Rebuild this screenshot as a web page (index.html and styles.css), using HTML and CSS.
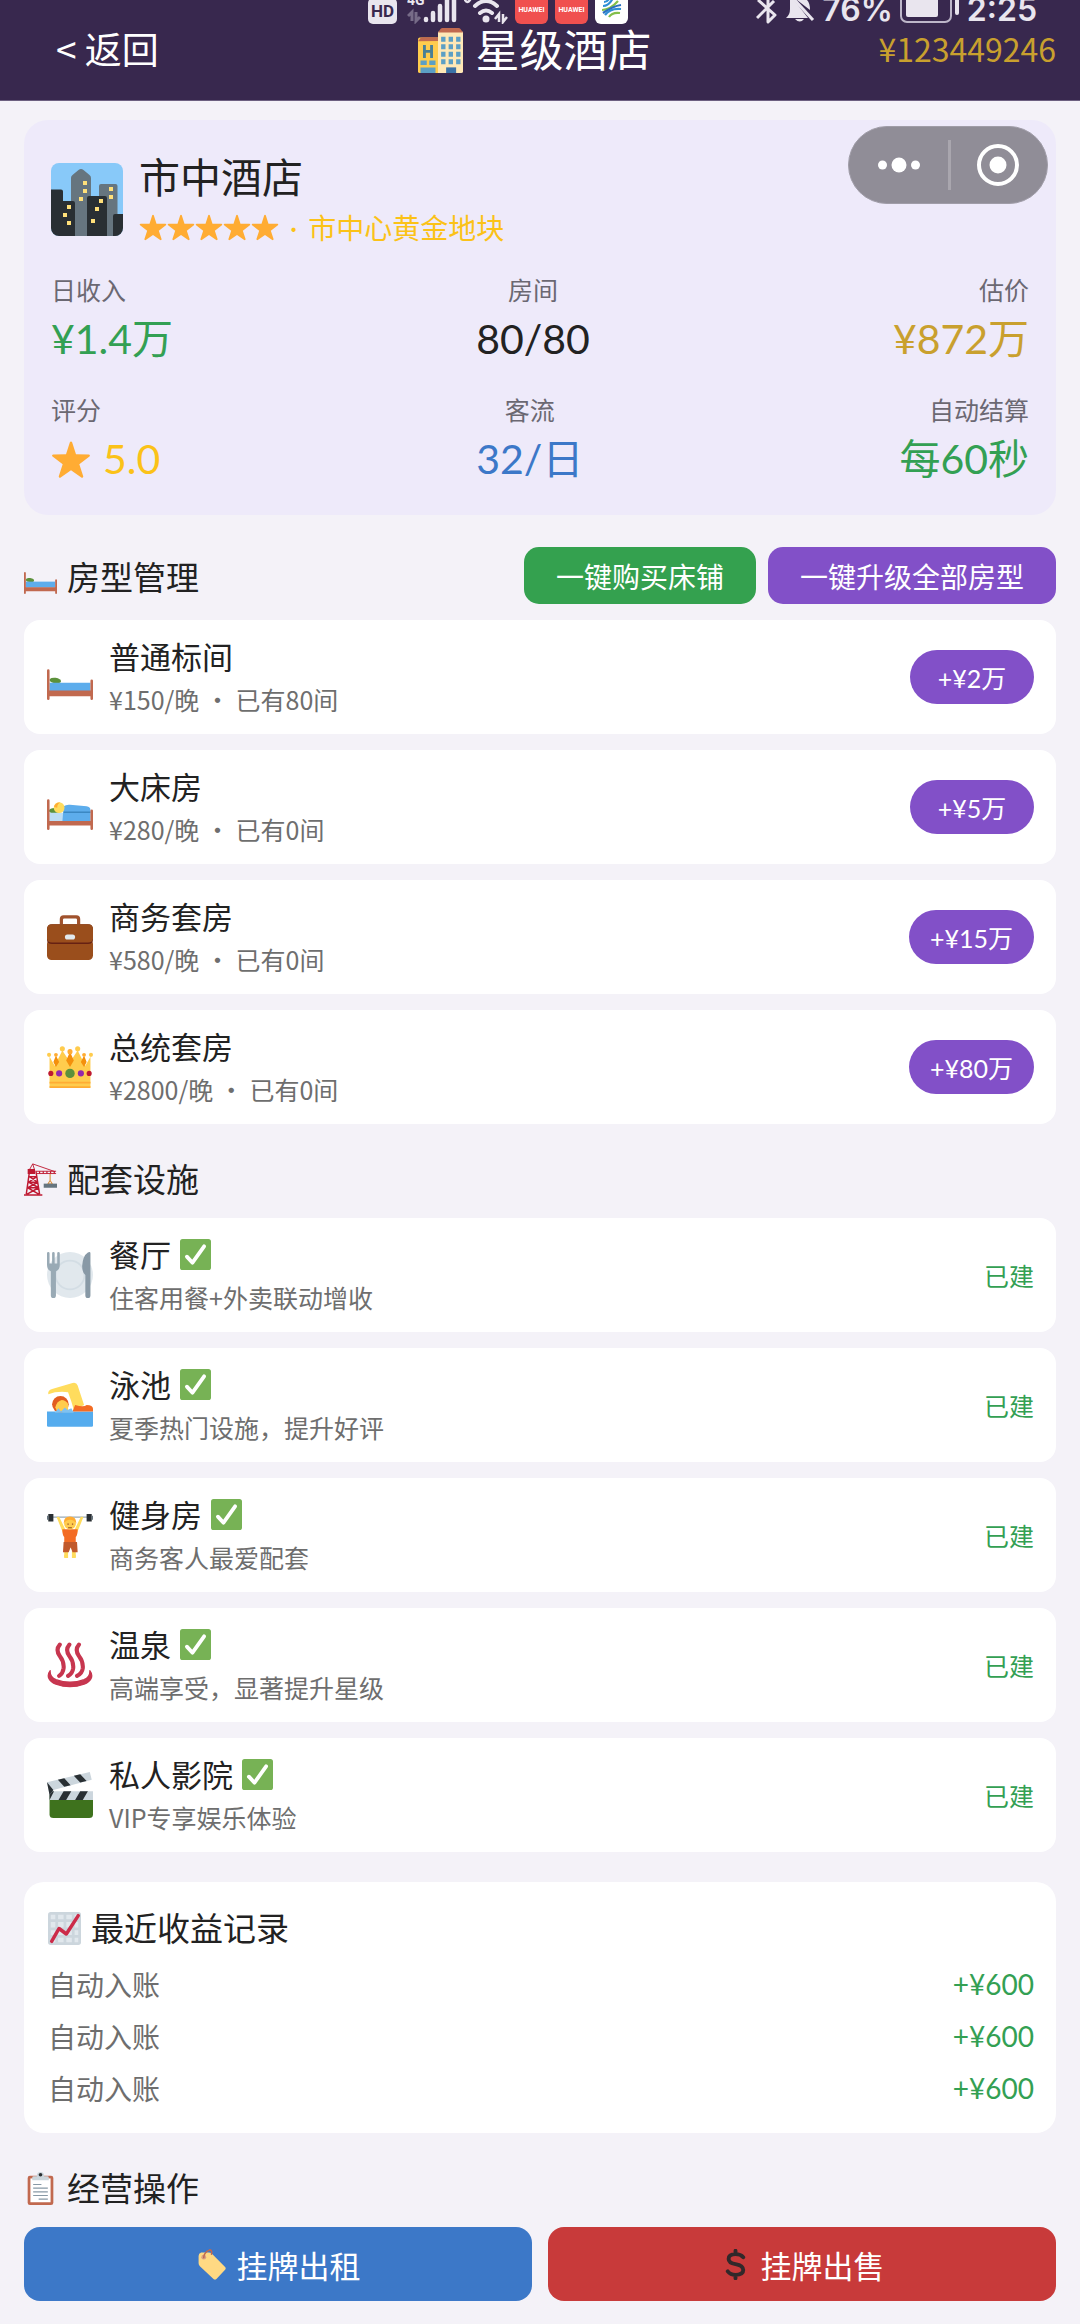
FILE: index.html
```html
<!DOCTYPE html>
<html lang="zh-CN">
<head>
<meta charset="utf-8">
<meta name="viewport" content="width=device-width, initial-scale=1">
<title>星级酒店</title>
<link rel="stylesheet" href="styles.css">
</head>
<body>

<svg class="sprite" aria-hidden="true">
  <symbol id="i-hotel" viewBox="0 0 36 36">
    <path d="M0 9q0-1.500 1.500-1.500H16V36H1.500Q0 36 0 34.500z" fill="#ffcc4d"/>
    <path d="M0 10.500 2 8q.5-.6 1.500-.6H16v3z" fill="#c1694f"/>
    <path d="M16 3h20v31.500q0 1.500-1.500 1.500H16z" fill="#ffe8b6"/>
    <path d="M16 3.500 18 .8q.6-.8 1.500-.8h13q.9 0 1.500.8l2 2.700z" fill="#c1694f"/>
    <path d="M4 13.500h2.300v4h3.400v-4H12V24H9.700v-4.300H6.300V24H4z" fill="#4a7f96"/>
    <path d="M2 26h5v3.500H2zm7 0h5v3.500H9zM2 31.500h12V36H2zM18.500 7H22v4h-3.500zm6 0H28v4h-3.500zm6 0H34v4h-3.500zM18.500 13H22v4h-3.500zm6 0H28v4h-3.500zm6 0H34v4h-3.500zM18.500 19H22v4h-3.500zm6 0H28v4h-3.500zm6 0H34v4h-3.500zM18.500 25H22v4h-3.500zm6 0H28v4h-3.500zm6 0H34v4h-3.500z" fill="#5c9fc5"/>
    <path d="M22.500 31.500h8V36h-8z" fill="#3b73a8"/>
  </symbol>

  <symbol id="i-city" viewBox="0 0 72 73">
    <clipPath id="city-clip"><rect width="72" height="73" rx="8"/></clipPath>
    <g clip-path="url(#city-clip)">
      <path d="M0 0h72v73H0z" fill="#88c9f9"/>
      <path d="M20 73V15q0-2 1.500-3l6-5Q30 5 32.500 7l6 5q1.500 1 1.500 3v58zM48 23q0-2 2-2h14.500q2 0 2 2v50H48z" fill="#66757f"/>
      <path d="M0 26.500h10q2 0 2 2V38h10q2 0 2 2v33H0zM36 35q0-2 2-2h16q2 0 2 2v38H36zM62 53q0-2 2-2h8v22H62z" fill="#292f33"/>
      <path d="M32 18h4v4h-4zm0 8h4v4h-4zm-4 8h4v4h-4zM16 42h4v4h-4zm-4 8h4v4h-4zm4 8h4v4h-4zM58 24h4v4h-4zm0 8h4v4h-4zM48 36h4v4h-4zm-4 8h4v4h-4zm-4 12h4v4h-4z" fill="#ffe07a"/>
    </g>
  </symbol>

  <symbol id="i-star" viewBox="0 0 36 36">
    <path d="M27.300 34.700 18 28.200l-9.300 6.500c-.8.600-2-.2-1.700-1.200l3.500-10.800-9.100-6.900c-.8-.6-.4-1.900.6-1.900l11.500-.1L17 2.900c.3-1 1.700-1 2 0l3.500 10.900 11.500.1c1 0 1.400 1.300.6 1.900l-9.100 6.900L29 33.500c.3 1-.9 1.800-1.700 1.200z" fill="#ffac33"/>
  </symbol>

  <symbol id="i-bed" viewBox="0 0 36 36">
    <ellipse cx="6.500" cy="20.800" rx="4.500" ry="2.200" transform="rotate(8 6.500 20.800)" fill="#5c913b"/>
    <path d="M2 22.500h32V29H2z" fill="#5dadec"/>
    <path d="M0 13q0-1 1-1t1 1v15.500h32V21q0-1 1-1t1 1v14q0 1-1 1t-1-1v-2H2v2q0 1-1 1t-1-1z" fill="#c1694f"/>
  </symbol>

  <symbol id="i-sleep" viewBox="0 0 36 36">
    <ellipse cx="6" cy="21" rx="4.500" ry="2.200" fill="#5c913b"/>
    <path d="M2 22.500h12V30H2z" fill="#bdddf4"/>
    <path d="M13 17.500q2-1.500 5-1.200l13 1.200q3 .3 3 3V30H12z" fill="#5dadec"/>
    <path d="M13 21.500h21v1.200H13z" fill="#3b88c3"/>
    <circle cx="9.500" cy="18.500" r="4.200" fill="#ffdc5d"/>
    <path d="M5.500 18q1-4 5-3.500-2.500 1-2.500 4z" fill="#ffac33"/>
    <path d="M0 13q0-1 1-1t1 1v16h32v-8q0-1 1-1t1 1v14q0 1-1 1t-1-1v-2.500H2V35q0 1-1 1t-1-1z" fill="#c1694f"/>
  </symbol>

  <symbol id="i-case" viewBox="0 0 36 36">
    <path d="M10 8V4q0-3 3-3h10q3 0 3 3v4h-2.500V4.500q0-1-1-1h-9q-1 0-1 1V8z" fill="#a0522d"/>
    <rect y="20" width="36" height="16" rx="3.500" fill="#9a4e1c"/>
    <path d="M0 12q0-4 4-4h28q4 0 4 4v8q0 3.500-4 3.500H4Q0 23.500 0 20z" fill="#662113"/>
    <path d="M0 12q0-4 4-4h28q4 0 4 4v7q0 3.300-4 3.300H4Q0 22.300 0 19z" fill="#9a4e1c"/>
    <rect x="14" y="16" width="8" height="4" rx="2" fill="#e1e8ed"/>
  </symbol>

  <symbol id="i-crown" viewBox="0 0 36 36">
    <path d="m2 10 4 7 6-12 6 9 6-9 6 12 4-7v24H2z" fill="#ffcc4d"/>
    <path d="m7 9 2.500 5L7 18l-2-4zm11-3 3 7-3 5-3-5zm11 3 2 5-2 4-2.500-4z" fill="#f4900c"/>
    <g fill="#ffcc4d"><circle cx="1.600" cy="8.500" r="1.600"/><circle cx="12" cy="3.800" r="2"/><circle cx="24" cy="3.800" r="2"/><circle cx="34.400" cy="8.500" r="1.600"/></g>
    <g fill="#ffac33"><circle cx="7" cy="8.500" r="1.500"/><circle cx="18" cy="6" r="2"/><circle cx="29" cy="8.500" r="1.500"/><path d="M2 29.500h32V31H2zM2 33h32v1.500H2z"/></g>
    <circle cx="18" cy="23" r="3.700" fill="#5c913b"/>
    <circle cx="9.500" cy="23" r="2.400" fill="#9328ab"/><circle cx="26.500" cy="23" r="2.400" fill="#9328ab"/>
    <circle cx="3" cy="23" r="2" fill="#be1931"/><circle cx="33" cy="23" r="2" fill="#be1931"/>
  </symbol>

  <symbol id="i-crane" viewBox="0 0 36 36">
    <g fill="none" stroke="#be1931" stroke-width="1.600">
      <path d="M6 9 2.500 34M13 9l4 25M0 35h20M6 15h8M5 21h10M4 27h12M6 15l9 6M14 15l-9 6 11 6M15 21 4 27l12 7M16 27 3.500 34"/>
      <path d="M9.500 1 5 9M9.500 1 12 9M9.500 1 34 9.500M13 11.500h22M13 9h22" stroke-width="1"/>
      <path d="M17 9v2.500M21 9v2.500M25 9v2.500M29 9v2.500M33 9v2.500" stroke-width="1.300"/>
    </g>
    <path d="M4 6.500h8V12H4z" fill="#be1931"/>
    <path d="M28.500 12v7l-2.500 4h5l-2.500-4" fill="none" stroke="#d9903c" stroke-width="1.200"/>
    <path d="M21.500 22.500H36V27H21.500z" fill="#66757f"/>
  </symbol>

  <symbol id="i-dine" viewBox="0 0 36 36">
    <circle cx="18" cy="18" r="18" fill="#e1e8ed"/>
    <circle cx="18" cy="18" r="12" fill="#d3dde4"/><circle cx="18" cy="18" r="10.600" fill="#e1e8ed"/>
    <path d="M0 1q0-1 1-1t1 1v8h2V1q0-1 1-1t1 1v8h2V1q0-1 1-1t1 1v9q0 4-3 5v19q0 2-2 2t-2-2V15q-3-1-3-5z" fill="#99aab5"/>
    <path d="M34 1v33q0 2-2 2t-2-2V18q-2.500-2-2.500-7Q28 3 32 .4q2-.9 2 .6z" fill="#8899a6"/>
  </symbol>

  <symbol id="i-swim" viewBox="0 0 36 36">
    <path d="M0 23h36v11q0 1-1 1H1q-1 0-1-1z" fill="#55acee"/>
    <path d="M1 9.500Q.5 6.500 4 5.500L20 .8q3-.8 4 2L29 18l-8 4q-1.500-6-4.500-14Q8 7 1 9.500z" fill="#ffdc5d"/>
    <path d="M22 18q7 2 9 0 5 0 5 3v2H20z" fill="#f36c24"/>
    <circle cx="10.500" cy="17.500" r="6.500" fill="#e25c20"/>
    <path d="M6.500 20q1-5 5-6 3 0 5 3v6H8z" fill="#ffcc4d"/>
    <path d="m6 24 3-3.500 2 2.500 3-3 2 2 3-1.500 2 3.500z" fill="#7fc1f0"/>
  </symbol>

  <symbol id="i-lift" viewBox="0 0 36 36">
    <path d="M3 3.500h30v1H3z" fill="#99aab5"/>
    <path d="M1 1.500h4v6H1zM31 1.500h4v6h-4z" fill="#292f33"/><path d="M0 3h1v3H0zM35 3h1v3h-1z" fill="#66757f"/>
    <path d="m7.500 4 2-.3L15 15l-1 5zM28.500 4l-2-.3L21 15l1 5z" fill="#ffdc5d"/>
    <path d="M13.500 24h9v9q.5 2 0 3h-3v-8h-3v8h-3q-.5-1 0-3z" fill="#ffdc5d"/>
    <path d="M12 13.500h12q0 5-1.500 6v5h-9v-5Q12 18.500 12 13.500z" fill="#f36c24"/>
    <path d="M13 23.500h10.500l.5 8h-4l-1.500-4-1.500 4h-4.500z" fill="#c1592b"/>
    <circle cx="18" cy="9" r="4.600" fill="#ffcc4d"/>
    <path d="M13 9q0-5.500 5-5.500T23 9q-2-3-5-3t-5 3z" fill="#ffac33"/>
    <path d="M16 9h1v1h-1zm3.500 0h1v1h-1zM16.500 12h3v.8h-3z" fill="#99512a"/>
  </symbol>

  <symbol id="i-spring" viewBox="0 0 36 36">
    <g fill="none" stroke="#c7364f" stroke-width="3.200" stroke-linecap="round">
      <path d="M10 2q-3.500 4 0 9 3.500 4.500 3 9.500-.5 4-3.500 6"/>
      <path d="M17.500 2q-3.500 4 0 9 3.500 4.500 3 9.500-.5 4-4 6"/>
      <path d="M25 2q-3.500 4 0 9 3.500 4.500 3 9.500-.5 4-4.500 6"/>
    </g>
    <path d="M2.500 22.500C-1 27 2 31 7 33q11 4 22 0c5-2 8-6 4.500-10.500q.5 5-4.500 7-11 4-22 0-5-2-4.500-7z" fill="#c7364f" stroke="#c7364f" stroke-width="1" stroke-linejoin="round"/>
  </symbol>

  <symbol id="i-film" viewBox="0 0 36 36">
    <path d="M2 18h34v15q0 3-3 3H5q-3 0-3-3z" fill="#3e721d"/>
    <path d="M2 15h34v7H2z" fill="#ccd6dd"/>
    <path d="m2 22V15l3.500 0zM13 15h6l-4 7H9zM26 15h6l-4 7h-6z" fill="#292f33"/>
    <path d="M0 8 33.500 0l1.500 6L5 14l-3 4z" fill="#ccd6dd"/>
    <path d="m0 8 5 6-3 4zM8.500 6l5-1.200 5 5.500-5 1.300zM21 3l5-1.200L31 7l-5 1.300z" fill="#292f33"/>
  </symbol>

  <symbol id="i-check" viewBox="0 0 36 36">
    <rect width="36" height="36" rx="3" fill="#77b255"/>
    <path d="m8 20.500 6.500 7L28 8.500" fill="none" stroke="#fff" stroke-width="4.400" stroke-linecap="round" stroke-linejoin="round"/>
  </symbol>

  <symbol id="i-chart" viewBox="0 0 36 36">
    <rect width="36" height="36" rx="3" fill="#ccd6dd"/>
    <path d="M3 3h5v5H3zm8 0h6v5h-6zm9 0h6v5h-6zm9 0h4v5h-4zM3 11h5v6H3zm8 0h6v6h-6zm9 0h6v6h-6zm9 0h4v6h-4zM3 20h5v5H3zm8 0h6v5h-6zm9 0h6v5h-6zm9 0h4v5h-4zM3 28h5v5H3zm8 0h6v5h-6zm9 0h6v5h-6zm9 0h4v5h-4z" fill="#e1e8ed"/>
    <path d="m4 32 8-14 8 6L33 4" fill="none" stroke="#cc2b49" stroke-width="3.800" stroke-linecap="round" stroke-linejoin="round"/>
  </symbol>

  <symbol id="i-clip" viewBox="0 0 36 36">
    <rect x="4" y="4" width="28" height="32" rx="2.500" fill="#c1694f"/>
    <path d="M7 7h22v26H7z" fill="#fff"/>
    <path d="M9 9V6q0-1.500 1.500-1.500H14Q14 0 18 0t4 4.500h3.500Q27 4.500 27 6v3z" fill="#ccd6dd"/>
    <circle cx="18" cy="3" r="2" fill="#292f33"/>
    <path d="M10 13h9v1.300h-9zm0 4h16v1.300H10zm0 4h16v1.300H10zm0 4h16v1.300H10zm6 4h10v1.300H16z" fill="#8899a6"/>
  </symbol>

  <symbol id="i-tag" viewBox="0 0 36 36">
    <path d="M3 8q0-3 3-4l9 0q2 0 3.500 1.500l15 15q2 2 0 4l-9.500 10q-2 2-4 0L4.500 20Q3 18.500 3 16.500z" fill="#ffd983"/>
    <circle cx="9" cy="9.500" r="2.800" fill="#d99e82"/>
    <path d="M9 10Q9 4 16 1q3 0 2 5" fill="none" stroke="#c1694f" stroke-width="1.800" stroke-linecap="round"/>
  </symbol>

  <symbol id="i-dollar" viewBox="0 0 36 36">
    <path d="M27 9.500Q24 6 18 6q-8 0-8 5.500 0 4.500 8 6 9 1.500 9 7 0 5.500-9 5.500-6 0-9-4M18 2v4m0 24v4" fill="none" stroke="#31282a" stroke-width="4.500" stroke-linecap="round"/>
  </symbol>
</svg>

<header class="topbar">
  <button class="back" type="button">&lt; 返回</button>
  <h1 class="topbar-title"><svg class="emoji"><use href="#i-hotel"/></svg>星级酒店</h1>
  <span class="balance">¥123449246</span>

  <div class="statusbar">
    <div class="status-left">
      <span class="hd">HD</span>
      <svg class="signal" viewBox="0 0 50 24" aria-hidden="true">
        <path d="M5 21v-9l-4 4M9 12v9l4-4" fill="none" stroke="#776c88" stroke-width="3"/>
        <path d="M19 19v1M26 13v7M33 6v14M40 0v20M47 0v20" stroke="#e9e5ee" stroke-width="4.500" stroke-linecap="round"/>
        <text x="0" y="5" class="net">4G</text>
      </svg>
      <svg class="wifi" viewBox="0 0 44 24" aria-hidden="true">
        <g fill="none" stroke="#e9e5ee" stroke-width="4" stroke-linecap="round"><path d="M11 6q11-10 22 0M16 13q6-5 12 0"/><path d="M1 0q2 4 5 0" stroke-width="2.500"/></g>
        <circle cx="22" cy="19" r="3.500" fill="#e9e5ee"/>
        <path d="M35 22v-8l-4 5M39 14v8l4-5" fill="none" stroke="#e9e5ee" stroke-width="2.500"/>
      </svg>
      <span class="app app-red">HUAWEI</span>
      <span class="app app-red">HUAWEI</span>
      <span class="app app-white">
        <svg viewBox="0 0 20 20" aria-hidden="true"><g fill="none" stroke-width="2.200"><path d="M1 8Q7 8 11 0M2 4q3 0 5-3M3 17Q8 10 19 11" stroke="#2f8fd6"/><path d="M0 12q8 0 16-9M7 19q3-5 11-4" stroke="#83bf4a"/><path d="M1 15Q11 8 19 7" stroke="#2a6fc0"/></g></svg>
      </span>
    </div>
    <div class="status-right">
      <svg class="bt" viewBox="0 0 22 24" aria-hidden="true"><path d="m1 18 17-17M2 0l17 15-7 7V0" fill="none" stroke="#e9e5ee" stroke-width="3" stroke-linejoin="round"/></svg>
      <svg class="bell" viewBox="0 0 30 24" aria-hidden="true"><path d="M1 18q4-3 4-9V0h4l14 18zM12 0h10q3 3 3 10zM10 19h9q-4 5-9 0z" fill="#e9e5ee"/><path d="m7-3 21 23" stroke="#e9e5ee" stroke-width="3"/></svg>
      <span>76%</span>
      <svg class="battery" viewBox="0 0 60 24" aria-hidden="true"><rect x="1" y="-8" width="50" height="30" rx="6" fill="none" stroke="#bdb6c9" stroke-width="2"/><rect x="6" y="-4" width="32" height="21" rx="2" fill="#e9e5ee"/><rect x="55" y="-2" width="4" height="17" rx="2" fill="#e9e5ee"/></svg>
      <span>2:25</span>
    </div>
  </div>
</header>

<div class="capsule">
  <button type="button" aria-label="更多"><svg class="capsule-icon" viewBox="0 0 44 44"><circle cx="5.500" cy="22" r="4.500" fill="#fff"/><circle cx="22" cy="22" r="7.500" fill="#fff"/><circle cx="38.500" cy="22" r="4.500" fill="#fff"/></svg></button>
  <button type="button" aria-label="关闭"><svg class="capsule-icon" viewBox="0 0 44 44"><circle cx="22" cy="22" r="19" fill="none" stroke="#fff" stroke-width="4"/><circle cx="22" cy="22" r="8.500" fill="#fff"/></svg></button>
</div>

<main class="page">
  <section class="hero">
    <div class="hero-head">
      <svg class="hero-icon"><use href="#i-city"/></svg>
      <div>
        <h2 class="hero-name">市中酒店</h2>
        <p class="hero-sub"><svg class="emoji"><use href="#i-star"/></svg><svg class="emoji"><use href="#i-star"/></svg><svg class="emoji"><use href="#i-star"/></svg><svg class="emoji"><use href="#i-star"/></svg><svg class="emoji"><use href="#i-star"/></svg><span class="dot">·</span><span>市中心黄金地块</span></p>
      </div>
    </div>
    <dl class="stats">
      <div><dt>日收入</dt><dd class="green">¥1.4万</dd></div>
      <div><dt>房间</dt><dd>80/80</dd></div>
      <div><dt>估价</dt><dd class="gold">¥872万</dd></div>
    </dl>
    <dl class="stats">
      <div><dt>评分</dt><dd class="amber"><svg class="emoji"><use href="#i-star"/></svg>5.0</dd></div>
      <div><dt>客流</dt><dd class="blue">32/日</dd></div>
      <div><dt>自动结算</dt><dd class="green">每60秒</dd></div>
    </dl>
  </section>

  <div class="section-head">
    <h2 class="section-title"><svg class="emoji"><use href="#i-bed"/></svg>房型管理</h2>
    <div class="section-actions">
      <button class="action bg-green" type="button">一键购买床铺</button>
      <button class="action bg-purple" type="button">一键升级全部房型</button>
    </div>
  </div>
  <ul class="list">
    <li class="item"><svg class="item-icon"><use href="#i-bed"/></svg><div class="item-text"><h3>普通标间</h3><p>¥150/晚 · 已有80间</p></div><button class="pill" type="button">+¥2万</button></li>
    <li class="item"><svg class="item-icon"><use href="#i-sleep"/></svg><div class="item-text"><h3>大床房</h3><p>¥280/晚 · 已有0间</p></div><button class="pill" type="button">+¥5万</button></li>
    <li class="item"><svg class="item-icon"><use href="#i-case"/></svg><div class="item-text"><h3>商务套房</h3><p>¥580/晚 · 已有0间</p></div><button class="pill" type="button">+¥15万</button></li>
    <li class="item"><svg class="item-icon"><use href="#i-crown"/></svg><div class="item-text"><h3>总统套房</h3><p>¥2800/晚 · 已有0间</p></div><button class="pill" type="button">+¥80万</button></li>
  </ul>

  <div class="section-head">
    <h2 class="section-title"><svg class="emoji"><use href="#i-crane"/></svg>配套设施</h2>
  </div>
  <ul class="list">
    <li class="item"><svg class="item-icon"><use href="#i-dine"/></svg><div class="item-text"><h3>餐厅<svg class="emoji"><use href="#i-check"/></svg></h3><p>住客用餐+外卖联动增收</p></div><span class="built">已建</span></li>
    <li class="item"><svg class="item-icon"><use href="#i-swim"/></svg><div class="item-text"><h3>泳池<svg class="emoji"><use href="#i-check"/></svg></h3><p>夏季热门设施，提升好评</p></div><span class="built">已建</span></li>
    <li class="item"><svg class="item-icon"><use href="#i-lift"/></svg><div class="item-text"><h3>健身房<svg class="emoji"><use href="#i-check"/></svg></h3><p>商务客人最爱配套</p></div><span class="built">已建</span></li>
    <li class="item"><svg class="item-icon"><use href="#i-spring"/></svg><div class="item-text"><h3>温泉<svg class="emoji"><use href="#i-check"/></svg></h3><p>高端享受，显著提升星级</p></div><span class="built">已建</span></li>
    <li class="item"><svg class="item-icon"><use href="#i-film"/></svg><div class="item-text"><h3>私人影院<svg class="emoji"><use href="#i-check"/></svg></h3><p>VIP专享娱乐体验</p></div><span class="built">已建</span></li>
  </ul>

  <section class="records">
    <h2 class="section-title"><svg class="emoji"><use href="#i-chart"/></svg>最近收益记录</h2>
    <ul class="record-list">
      <li><span>自动入账</span><span class="amount">+¥600</span></li>
      <li><span>自动入账</span><span class="amount">+¥600</span></li>
      <li><span>自动入账</span><span class="amount">+¥600</span></li>
    </ul>
  </section>

  <div class="section-head">
    <h2 class="section-title"><svg class="emoji"><use href="#i-clip"/></svg>经营操作</h2>
  </div>
  <div class="operations">
    <button class="operation bg-blue" type="button"><svg class="emoji"><use href="#i-tag"/></svg>挂牌出租</button>
    <button class="operation bg-red" type="button"><svg class="emoji"><use href="#i-dollar"/></svg>挂牌出售</button>
  </div>
</main>
</body>
</html>
```
FILE: styles.css
```css
* {
  box-sizing: border-box;
  margin: 0;
  padding: 0;
}

body {
  position: relative;
  background: #f4f2f8;
  color: #222;
  font-family: "Noto Sans CJK SC", sans-serif;
}

h1, h2, h3 { font-weight: 400; }
ul { list-style: none; }
svg { display: block; flex: none; }

button {
  border: 0;
  background: none;
  color: #fff;
  font-family: inherit;
}

.sprite {
  position: absolute;
  width: 0;
  height: 0;
}

.green { color: #33a053; }
.gold { color: #c9a02e; }
.amber { color: #fbc218; }
.blue { color: #3c78c8; }
.bg-green { background: #34a14f; }
.bg-purple { background: #8250c8; }
.bg-blue { background: #3c78c8; }
.bg-red { background: #c83a3a; }

/* Top bar */
.topbar {
  position: relative;
  display: flex;
  align-items: center;
  justify-content: space-between;
  height: 101px;
  padding: 0 24px 4px;
  background: #38284e;
  border-bottom: 1px solid #6c6080;
}

.back {
  padding: 0 32px;
  font-size: 37px;
  line-height: 52px;
}

.topbar-title {
  display: flex;
  align-items: center;
  gap: 13px;
  color: #fff;
  font-size: 44px;
  line-height: 56px;
}
.topbar-title .emoji { width: 45px; height: 45px; margin-top: 4px; }

.balance {
  color: #c9a02e;
  font-size: 32px;
}

.statusbar {
  position: absolute;
  top: 0;
  left: 0;
  right: 0;
  display: flex;
  justify-content: space-between;
  height: 24px;
  padding: 0 43px 0 368px;
  overflow: hidden;
  color: #e9e5ee;
}
.status-left,
.status-right {
  display: flex;
  align-items: flex-end;
  gap: 7px;
}
.status-right {
  font: 600 32px/28px Inter, sans-serif;
}
.hd {
  width: 29px;
  height: 26px;
  border-radius: 5px;
  background: #e9e5ee;
  color: #38284e;
  font: 700 17px/26px Roboto, sans-serif;
  text-align: center;
}
.signal { width: 50px; height: 24px; margin-left: 3px; }
.net { fill: #e9e5ee; font: 700 14px Roboto, sans-serif; }
.wifi { width: 44px; height: 24px; }
.app {
  width: 33px;
  height: 32px;
  border-radius: 6px;
  font: 700 7px/36px Roboto, sans-serif;
  text-align: center;
}
.app-red { background: #f0504f; color: #fff; }
.app-white {
  display: flex;
  align-items: center;
  justify-content: center;
  background: #fff;
}
.app-white svg { width: 20px; height: 20px; }
.bt { width: 22px; height: 24px; }
.bell { width: 30px; height: 24px; }
.battery { width: 60px; height: 24px; }

/* Floating mini-program menu */
.capsule {
  position: absolute;
  top: 126px;
  right: 32px;
  display: flex;
  width: 200px;
  height: 78px;
  border: 1px solid #a09da8;
  border-radius: 39px;
  background: #908d97;
}
.capsule button {
  display: flex;
  flex: 1;
  align-items: center;
  justify-content: center;
}
.capsule::after {
  content: "";
  position: absolute;
  top: 13px;
  left: 50%;
  width: 3px;
  height: 50px;
  background: #a9a6ae;
}
.capsule-icon { width: 44px; height: 44px; }

/* Page */
.page { padding: 19px 24px 22px; }

.hero {
  margin-bottom: 32px;
  padding: 27px 27px 24px;
  border-radius: 24px;
  background: #eeeafa;
}
.hero-head {
  display: flex;
  align-items: center;
  gap: 16px;
}
.hero-icon { width: 72px; height: 73px; }
.hero-name {
  font-size: 41px;
  line-height: 56px;
}
.hero-sub {
  display: flex;
  align-items: center;
  color: #fbc218;
  font-size: 28px;
  line-height: 48px;
}
.hero-sub .emoji { width: 28px; height: 28px; }
.dot {
  margin: 0 11px;
  font-family: Lato, sans-serif;
}

.stats {
  display: flex;
  justify-content: space-between;
  margin-top: 20px;
  text-align: center;
}
.stats > :first-child { text-align: left; }
.stats > :last-child { text-align: right; }
.stats dt {
  color: #6b6872;
  font-size: 25px;
  line-height: 36px;
}
.stats dd {
  font-family: Lato, "Noto Sans CJK SC", sans-serif;
  font-size: 41px;
  line-height: 64px;
}
.stats dd .emoji {
  display: inline-block;
  width: 40px;
  height: 40px;
  margin-right: 12px;
  vertical-align: -5px;
}

.section-head {
  display: flex;
  align-items: center;
  justify-content: space-between;
  margin: 30px 0 16px;
}
.section-title {
  display: flex;
  align-items: center;
  gap: 10px;
  font-size: 33px;
  line-height: 48px;
}
.section-title .emoji {
  width: 33px;
  height: 33px;
  margin-top: 3px;
}
.section-actions {
  display: flex;
  gap: 12px;
}
.action {
  height: 57px;
  padding: 0 32px;
  border-radius: 15px;
  font-size: 28px;
}

.list {
  display: grid;
  gap: 16px;
}
.item {
  display: flex;
  align-items: center;
  gap: 16px;
  min-height: 114px;
  padding: 0 22px 0 23px;
  border-radius: 16px;
  background: #fff;
}
.item-icon { width: 46px; height: 46px; }
.item-text {
  flex: 1;
  padding-bottom: 2px;
}
.item-text h3 {
  display: flex;
  align-items: center;
  gap: 9px;
  font-size: 31px;
  line-height: 46px;
}
.item-text h3 .emoji { width: 31px; height: 31px; }
.item-text p {
  color: #6e6e6e;
  font-size: 25px;
  line-height: 40px;
}
.pill {
  min-width: 124px;
  height: 54px;
  padding: 0 21px;
  border-radius: 27px;
  background: #8250c8;
  font-family: Lato, "Noto Sans CJK SC", sans-serif;
  font-size: 25px;
}
.built {
  color: #33a053;
  font-size: 25px;
}

.records {
  margin-top: 30px;
  padding: 21px 22px 19px 24px;
  border-radius: 20px;
  background: #fff;
}
.record-list { margin-top: 7px; }
.record-list li {
  display: flex;
  justify-content: space-between;
  color: #6e6e6e;
  font-size: 28px;
  line-height: 52px;
}
.amount {
  color: #33a053;
  font-family: Lato, sans-serif;
}

.operations {
  display: grid;
  grid-template-columns: 1fr 1fr;
  gap: 16px;
}
.operation {
  display: flex;
  align-items: center;
  justify-content: center;
  gap: 10px;
  height: 74px;
  border-radius: 16px;
  font-size: 31px;
}
.operation .emoji { width: 31px; height: 31px; }
```
